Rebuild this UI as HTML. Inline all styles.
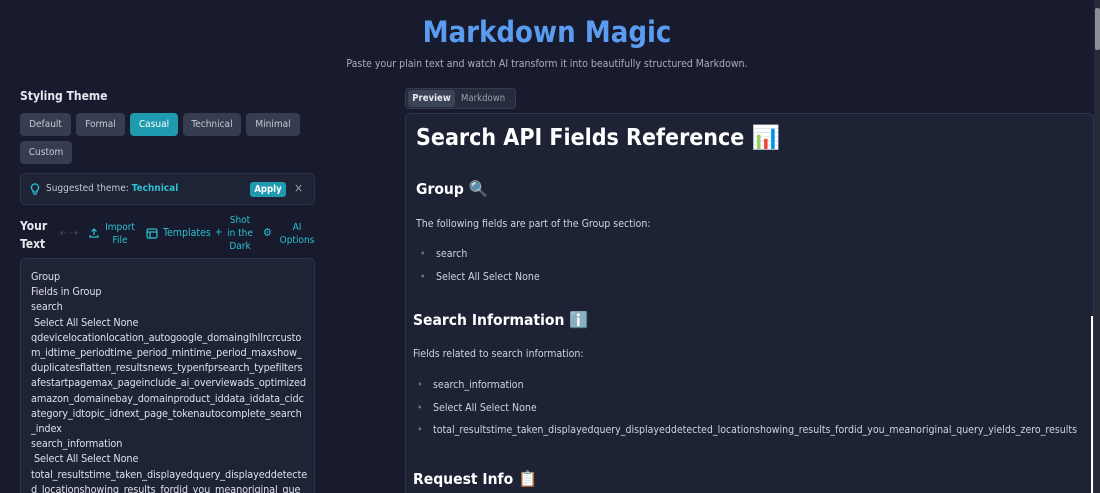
<!DOCTYPE html>
<html><head><meta charset="utf-8"><style>
*{box-sizing:border-box;margin:0;padding:0}
html,body{width:1100px;height:493px;overflow:hidden}
body{background:#171b2d;font-family:"DejaVu Sans Condensed","Liberation Sans",sans-serif;color:#e6e8ef;position:relative}
.abs{position:absolute}
h1.t{position:absolute;left:0;width:1094px;top:15px;text-align:center;font-size:29px;font-weight:bold;color:#5a9cf0;font-family:"DejaVu Sans Condensed",sans-serif}
.sub{left:0;width:1094px;top:58px;text-align:center;font-size:10.5px;color:#a7adbd}
.lbl{font-size:12px;font-weight:bold;color:#e6e8ef}
.btn{position:absolute;height:23px;background:#363d50;border-radius:4px;font-size:10px;color:#c6cad4;text-align:center;line-height:23px}
.btn.on{background:#1f9bb0;color:#fff}
.sug{left:20px;top:173px;width:295px;height:32px;background:#1e2336;border:1px solid #2d3448;border-radius:5px}
.cy{color:#2cc0d0}
.ta{left:20px;top:258px;width:295px;height:250px;background:#1e2336;border:1px solid #2d3448;border-radius:5px;padding:10px 10px;font-size:10.8px;line-height:15.2px;white-space:pre;overflow:hidden;color:#dde0e8;font-family:"DejaVu Sans Condensed",sans-serif;letter-spacing:-0.1px}
.tabs{left:405px;top:88px;width:111px;height:21px;background:#262c3e;border:1px solid #353c50;border-radius:4px}
.panel{left:405px;top:113px;width:689px;height:400px;background:#1d2235;border:1px solid #2e3549;border-radius:5px;overflow:hidden}
.pv{font-family:"DejaVu Sans Condensed",sans-serif}
.h1{font-size:23px;font-weight:bold;color:#fff}
.h2{font-size:15.5px;font-weight:bold;color:#fff}
.p{font-size:10.5px;color:#cfd3dc}
.li{font-size:10.5px;color:#cfd3dc}
.li:before{content:"•";position:absolute;left:-16px;color:#6a7184}
</style></head><body>
<h1 class="t">Markdown Magic</h1>
<div class="abs sub">Paste your plain text and watch AI transform it into beautifully structured Markdown.</div>

<div class="abs lbl" style="left:20px;top:89px">Styling Theme</div>
<div class="btn" style="left:20px;top:113px;width:51px">Default</div>
<div class="btn" style="left:76px;top:113px;width:49px">Formal</div>
<div class="btn on" style="left:130px;top:113px;width:48px">Casual</div>
<div class="btn" style="left:183px;top:113px;width:58px">Technical</div>
<div class="btn" style="left:246px;top:113px;width:54px">Minimal</div>
<div class="btn" style="left:20px;top:141px;width:52px">Custom</div>

<div class="abs sug">
 <svg class="abs" style="left:9px;top:9px" width="10" height="13" viewBox="0 0 10 13"><path d="M5 1a3.5 3.5 0 0 0-2 6.4V9h4V7.4A3.5 3.5 0 0 0 5 1zM3 11h4" fill="none" stroke="#2cc0d0" stroke-width="1.3"/></svg>
 <div class="abs" style="left:25px;top:9px;font-size:10px;color:#c6cad4">Suggested theme: <b class="cy">Technical</b></div>
 <div class="abs" style="left:229px;top:8px;width:36px;height:15px;background:#1f9bb0;border-radius:3px;font-size:9.5px;font-weight:bold;color:#fff;text-align:center;line-height:15px">Apply</div>
 <div class="abs" style="left:273px;top:7px;font-size:12px;color:#9aa0ae">×</div>
</div>

<div class="abs lbl" style="left:20px;top:217px;line-height:18px">Your<br>Text</div>
<div class="abs" style="left:60px;top:228px;font-size:10px;color:#4b5162">⇠ ⇢</div>
<svg class="abs" style="left:89px;top:228px" width="10" height="10" viewBox="0 0 10 10"><path d="M5 7V1M2.5 3.5 5 1l2.5 2.5M1 7v2h8V7" fill="none" stroke="#2cc0d0" stroke-width="1.2"/></svg>
<div class="abs cy" style="left:100px;top:221px;width:40px;text-align:center;font-size:10px;line-height:13px">Import<br>File</div>
<svg class="abs" style="left:146px;top:228px" width="12" height="11" viewBox="0 0 12 11"><rect x="1" y="1" width="10" height="9" rx="1.5" fill="none" stroke="#2cc0d0" stroke-width="1.2"/><path d="M1 4h10M4 4v6" stroke="#2cc0d0" stroke-width="1.2"/></svg>
<div class="abs cy" style="left:163px;top:227px;font-size:10.5px">Templates</div>
<div class="abs cy" style="left:215px;top:227px;font-size:10px">+</div>
<div class="abs cy" style="left:226px;top:214px;width:28px;text-align:center;font-size:10px;line-height:13px">Shot<br>in the<br>Dark</div>
<div class="abs cy" style="left:263px;top:226px;font-size:11px">⚙</div>
<div class="abs cy" style="left:279px;top:221px;width:36px;text-align:center;font-size:10px;line-height:13px">AI<br>Options</div>

<div class="abs ta">Group
Fields in Group
search
 Select All Select None
qdevicelocationlocation_autogoogle_domainglhllrcrcusto
m_idtime_periodtime_period_mintime_period_maxshow_
duplicatesflatten_resultsnews_typenfprsearch_typefilters
afestartpagemax_pageinclude_ai_overviewads_optimized
amazon_domainebay_domainproduct_iddata_iddata_cidc
ategory_idtopic_idnext_page_tokenautocomplete_search
_index
search_information
 Select All Select None
total_resultstime_taken_displayedquery_displayeddetecte
d_locationshowing_results_fordid_you_meanoriginal_que</div>

<div class="abs tabs">
 <div class="abs" style="left:2px;top:1px;width:47px;height:17px;background:#3b4356;border-radius:3px;font-size:9.5px;font-weight:bold;color:#e6e8ef;text-align:center;line-height:17px">Preview</div>
 <div class="abs" style="left:55px;top:1px;font-size:9.5px;color:#9aa0ae;line-height:17px">Markdown</div>
</div>

<div class="abs panel pv">
 <div class="abs h1" style="left:10px;top:10px">Search API Fields Reference 📊</div>
 <div class="abs h2" style="left:10px;top:66px">Group 🔍</div>
 <div class="abs p" style="left:10px;top:104px">The following fields are part of the Group section:</div>
 <div class="abs li" style="left:30px;top:134px">search</div>
 <div class="abs li" style="left:30px;top:157px">Select All Select None</div>
 <div class="abs h2" style="left:7px;top:197px">Search Information ℹ️</div>
 <div class="abs p" style="left:7px;top:234px">Fields related to search information:</div>
 <div class="abs li" style="left:27px;top:265px">search_information</div>
 <div class="abs li" style="left:27px;top:288px">Select All Select None</div>
 <div class="abs li" style="left:27px;top:310px;white-space:nowrap">total_resultstime_taken_displayedquery_displayeddetected_locationshowing_results_fordid_you_meanoriginal_query_yields_zero_results</div>
 <div class="abs h2" style="left:7px;top:356px">Request Info 📋</div>
 <div class="abs" style="left:684px;top:202px;width:4px;height:200px;background:#1d2235"></div>
 <div class="abs" style="left:685px;top:202px;width:3px;height:200px;background:#fff"></div>
</div>
<div class="abs" style="left:1094px;top:0;width:6px;height:493px;background:#262a36"></div>
<div class="abs" style="left:1095px;top:8px;width:5px;height:42px;background:#8b8f99;border-radius:2px"></div>
</body></html>
